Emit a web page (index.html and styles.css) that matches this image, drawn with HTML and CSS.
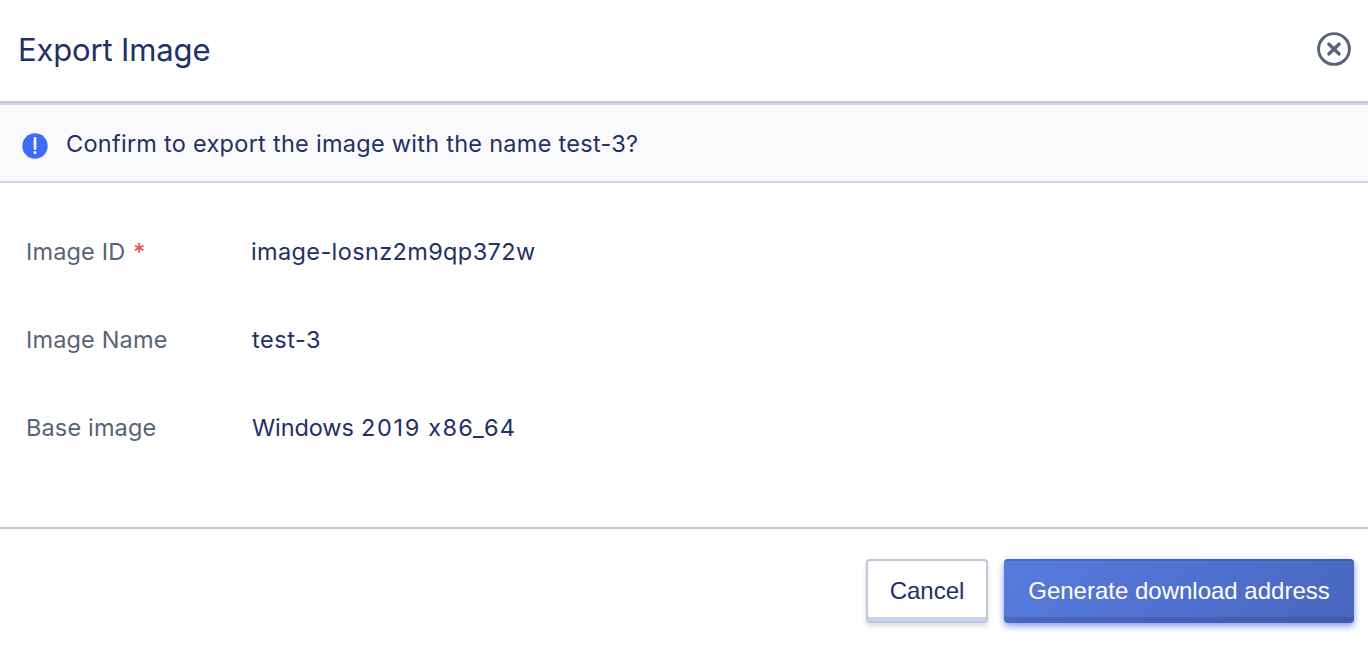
FILE: index.html
```html
<!DOCTYPE html>
<html lang="en">
<head>
<meta charset="utf-8">
<title>Export Image</title>
<link rel="stylesheet" href="styles.css">
</head>
<body>
<main class="dialog">
  <header class="dialog-header">
    <h1 class="title">Export Image</h1>
    <button class="close" aria-label="Close">
      <svg width="34" height="34" viewBox="0 0 34 34" fill="none" stroke="#576378">
        <circle cx="17" cy="17" r="15.4" stroke-width="2.9"/>
        <path d="M11.8 12l10.4 10M22.2 12l-10.4 10" stroke-width="3.2" stroke-linecap="round"/>
      </svg>
    </button>
  </header>
  <section class="notice">
    <svg class="notice-icon" width="26" height="26" viewBox="0 0 26 26">
      <circle cx="13" cy="13" r="12.7" fill="#3d6bfa"/>
      <path d="M13 5.3v10.4" stroke="#fff" stroke-width="2.7" stroke-linecap="round"/>
      <circle cx="13" cy="19.6" r="1.5" fill="#fff"/>
    </svg>
    <p class="notice-text">Confirm to export the image with the name test-3?</p>
  </section>
  <dl class="details">
    <div class="row"><dt class="label">Image ID<span class="required">*</span></dt><dd class="value value-id">image-losnz2m9qp372w</dd></div>
    <div class="row"><dt class="label">Image Name</dt><dd class="value value-name">test-3</dd></div>
    <div class="row"><dt class="label">Base image</dt><dd class="value value-base">Windows <span class="digits">2019</span> <span class="arch">x86_64</span></dd></div>
  </dl>
  <footer class="actions">
    <button class="button cancel">Cancel</button>
    <button class="button primary">Generate download address</button>
  </footer>
</main>
</body>
</html>
```

FILE: styles.css
```css
* { box-sizing: border-box; }
body { margin: 0; background: #fff; color: #223066; font-family: Inter, "Liberation Sans", sans-serif; }
.dialog { height: 650px; display: flex; flex-direction: column; overflow: hidden; }
.dialog-header { height: 103px; padding: 0 17px 3px 18px; display: flex; align-items: center; justify-content: space-between; border-bottom: 2px solid #c1c7d8; }
.title { margin: 0; padding-top: 1px; font-size: 31px; font-weight: 400; line-height: 40px; letter-spacing: -0.15px; }
.close { padding: 0; border: 0; background: none; display: flex; }
.notice { height: 80px; padding: 0 22px; display: flex; align-items: center; gap: 18px; background: #fafafc; border-top: 2px solid #d0d5e9; border-bottom: 2px solid #cfd4e7; }
.notice-icon { margin-top: 6px; }
.notice-text { margin: 0; padding-top: 2px; font-size: 23.5px; line-height: 32px; letter-spacing: 0.27px; white-space: nowrap; }
.details { margin: 0; padding: 24px 26px 0; flex: 1; font-size: 23.5px; }
.row { height: 88px; display: grid; grid-template-columns: 225px 1fr; align-items: center; }
.label { color: #576378; letter-spacing: 0.15px; white-space: nowrap; }
.required { margin-left: 8px; color: #e54b3c; }
.value { margin: 0; }
.value-id { letter-spacing: 0.37px; }
.value-name { padding-left: 1px; letter-spacing: 0.55px; }
.value-base { padding-left: 1px; letter-spacing: -0.1px; word-spacing: 0.7px; }
.digits { letter-spacing: 1.7px; }
.arch { letter-spacing: 1.3px; }
.actions { height: 123px; padding: 30px 14px 0; display: flex; justify-content: flex-end; gap: 16px; border-top: 2px solid #c1c7d8; }
.button { height: 64px; padding: 0 0 1px; border-radius: 4px; font: 24px/32px "Liberation Sans", Arial, sans-serif; white-space: nowrap; }
.cancel { width: 122px; border: 2px solid #c1c7d8; background: #fff; color: #223066; box-shadow: inset 0 -4px #c5d2f5, 0 3px 5px rgba(0, 0, 0, .14); }
.primary { width: 350px; border: 0; background: linear-gradient(135deg, #587be0, #4866be); color: #fff; box-shadow: inset 0 2px rgba(50, 65, 120, .28), inset 0 -6px rgba(50, 65, 120, .28), 0 3px 7px rgba(61, 99, 230, .65); }
```
